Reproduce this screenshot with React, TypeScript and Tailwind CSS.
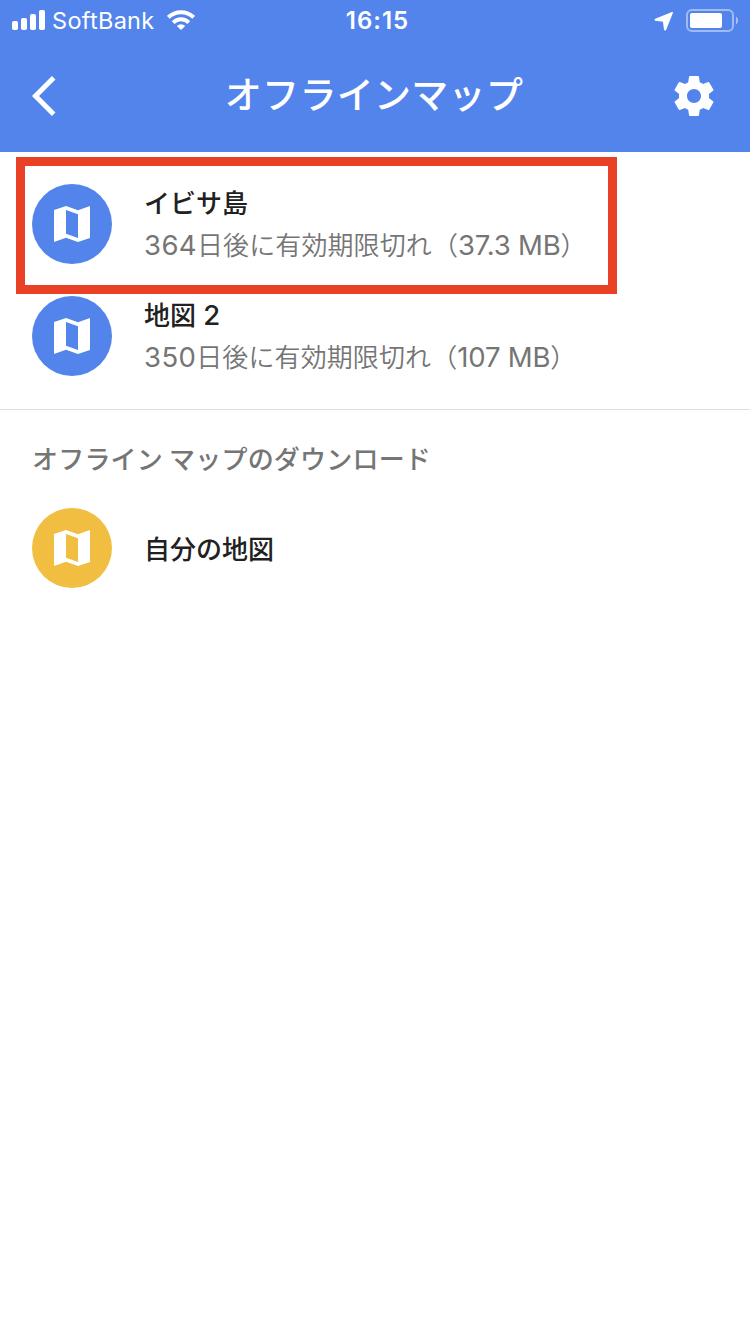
import React from 'react';

interface MapRowProps {
  title: React.ReactNode;
  days?: string;
  size?: string;
  color: string;
}

function MapIcon() {
  return (
    <svg viewBox="0 0 24 24" className="size-12" fill="white">
      <path
        fillRule="evenodd"
        d="M21 3l-6 2.1L9 3 3 5v16l6-2.1 6 2.1 6-2V3zM9 5l6 2.1V19l-6-2.1V5z"
      />
    </svg>
  );
}

function MapRow({ title, days, size, color }: MapRowProps) {
  return (
    <li className="flex h-28 items-center gap-8 px-8">
      <div
        className={`flex size-20 shrink-0 items-center justify-center rounded-full ${color}`}
      >
        <MapIcon />
      </div>
      <div className="flex flex-col whitespace-nowrap">
        <p
          className={`h-[42px] text-[26px] font-medium text-[#212121] ${
            days ? 'leading-10' : 'leading-[42px]'
          }`}
        >
          {title}
        </p>
        {days ? (
          <p className="h-[42px] text-[26px] leading-10 font-[350] tracking-[0.1px] text-[#757575]">
            <span className="font-['Inter'] text-[27.5px] font-normal tracking-[0.4px]">
              {days}
            </span>
            日後に有効期限切れ（
            <span className="font-['Inter'] text-[27.5px] font-normal tracking-[-0.2px]">
              {size}
            </span>
            ）
          </p>
        ) : null}
      </div>
    </li>
  );
}

function StatusBar() {
  return (
    <div className="grid h-10 grid-cols-3 items-center pr-[11px] pl-3 font-['Inter'] leading-10">
      <div className="flex items-center">
        <svg width="33" height="20" viewBox="0 0 33 20" fill="white">
          <rect x="0" y="11" width="6" height="9" rx="1.8" />
          <rect x="9" y="8" width="6" height="12" rx="1.8" />
          <rect x="18" y="4" width="6" height="16" rx="1.8" />
          <rect x="27" y="0" width="6" height="20" rx="1.8" />
        </svg>
        <span className="ml-[7px] w-[103px] pt-0.5 text-[23.5px] leading-[38px] tracking-[0.3px]">
          SoftBank
        </span>
        <svg
          className="ml-3"
          width="28"
          height="20"
          viewBox="0 0 28 20"
          fill="none"
          stroke="white"
          strokeWidth="4"
        >
          <path d="M1.3 7.4a18 18 0 0 1 25.4 0" />
          <path d="M6.2 12.6a11 11 0 0 1 15.6 0" />
          <path
            d="M14 20l-4.2-4.1a6 6 0 0 1 8.4 0z"
            fill="white"
            stroke="none"
          />
        </svg>
      </div>
      <div className="pt-0.5 pl-1 text-center text-[24px] leading-[38px] font-semibold tracking-[1px]">
        16:15
      </div>
      <div className="flex items-center justify-end pt-px">
        <svg width="20" height="20" viewBox="0 0 20 20" fill="white">
          <path d="M18.9 2c.3-.8-.2-1.3-1-1L1.2 7.7c-1 .5-.9 1.8.2 2l7.5 1 1.1 7.9c.2 1.2 1.6 1.4 2.1.3z" />
        </svg>
        <svg className="ml-3" width="53" height="24" viewBox="0 0 53 24">
          <rect
            x="1"
            y="1"
            width="46"
            height="21"
            rx="5"
            fill="none"
            stroke="white"
            strokeOpacity="0.45"
            strokeWidth="2"
          />
          <rect x="4" y="4" width="32" height="15" rx="2" fill="white" />
          <path d="M50 7.5a4.8 4.8 0 0 1 0 8z" fill="white" opacity="0.5" />
        </svg>
      </div>
    </div>
  );
}

function Header() {
  return (
    <header className="h-[152px] bg-[#5284ec] text-white">
      <StatusBar />
      <div className="flex h-28 items-center justify-between px-8">
        <svg
          width="48"
          height="48"
          viewBox="0 0 48 48"
          fill="none"
          stroke="white"
          strokeWidth="5"
        >
          <path d="M21.7 5.7L3.5 24l18.2 18.3" />
        </svg>
        <h1 className="pr-0.5 pb-1.5 text-[37px] leading-[52px] font-medium tracking-[0.3px]">
          オフラインマップ
        </h1>
        <svg width="48" height="48" viewBox="0 0 24 24" fill="white">
          <path d="M19.43 12.98c.04-.32.07-.64.07-.98s-.03-.66-.07-.98l2.11-1.65c.19-.15.24-.42.12-.64l-2-3.46c-.12-.22-.39-.3-.61-.22l-2.49 1c-.52-.4-1.08-.73-1.69-.98l-.38-2.65C14.46 2.18 14.25 2 14 2h-4c-.25 0-.46.18-.49.42l-.38 2.65c-.61.25-1.17.59-1.69.98l-2.49-1c-.23-.09-.49 0-.61.22l-2 3.46c-.13.22-.07.49.12.64l2.11 1.65c-.04.32-.07.65-.07.98s.03.66.07.98l-2.11 1.65c-.19.15-.24.42-.12.64l2 3.46c.12.22.39.3.61.22l2.49-1c.52.4 1.08.73 1.69.98l.38 2.65c.03.24.24.42.49.42h4c.25 0 .46-.18.49-.42l.38-2.65c.61-.25 1.17-.59 1.69-.98l2.49 1c.23.09.49 0 .61-.22l2-3.46c.12-.22.07-.49-.12-.64l-2.11-1.65zM12 15.5c-1.93 0-3.5-1.57-3.5-3.5s1.57-3.5 3.5-3.5 3.5 1.57 3.5 3.5-1.57 3.5-3.5 3.5z" />
        </svg>
      </div>
    </header>
  );
}

export default function App() {
  return (
    <div
      lang="ja"
      className="relative h-[1334px] w-[750px] overflow-hidden bg-white font-['Noto_Sans_CJK_JP',sans-serif]"
    >
      <Header />
      <ul className="h-[258px] border-b border-[#e0e0e0] pt-4">
        <MapRow
          color="bg-[#5284ec]"
          title="イビサ島"
          days="364"
          size="37.3 MB"
        />
        <MapRow
          color="bg-[#5284ec]"
          title={
            <>
              地図
              <span className="font-['Inter'] text-[27.5px]"> 2</span>
            </>
          }
          days="350"
          size="107 MB"
        />
      </ul>
      <section>
        <h2 className="h-[82px] px-8 pt-7 text-[26px] leading-10 font-medium tracking-[0.2px] text-[#757575]">
          オフライン マップのダウンロード
        </h2>
        <ul>
          <MapRow color="bg-[#f1be42]" title="自分の地図" />
        </ul>
      </section>
      {/* highlight around the first map */}
      <div className="absolute top-[157px] left-4 h-[137px] w-[601px] border-[9px] border-[#ea4026]" />
    </div>
  );
}
